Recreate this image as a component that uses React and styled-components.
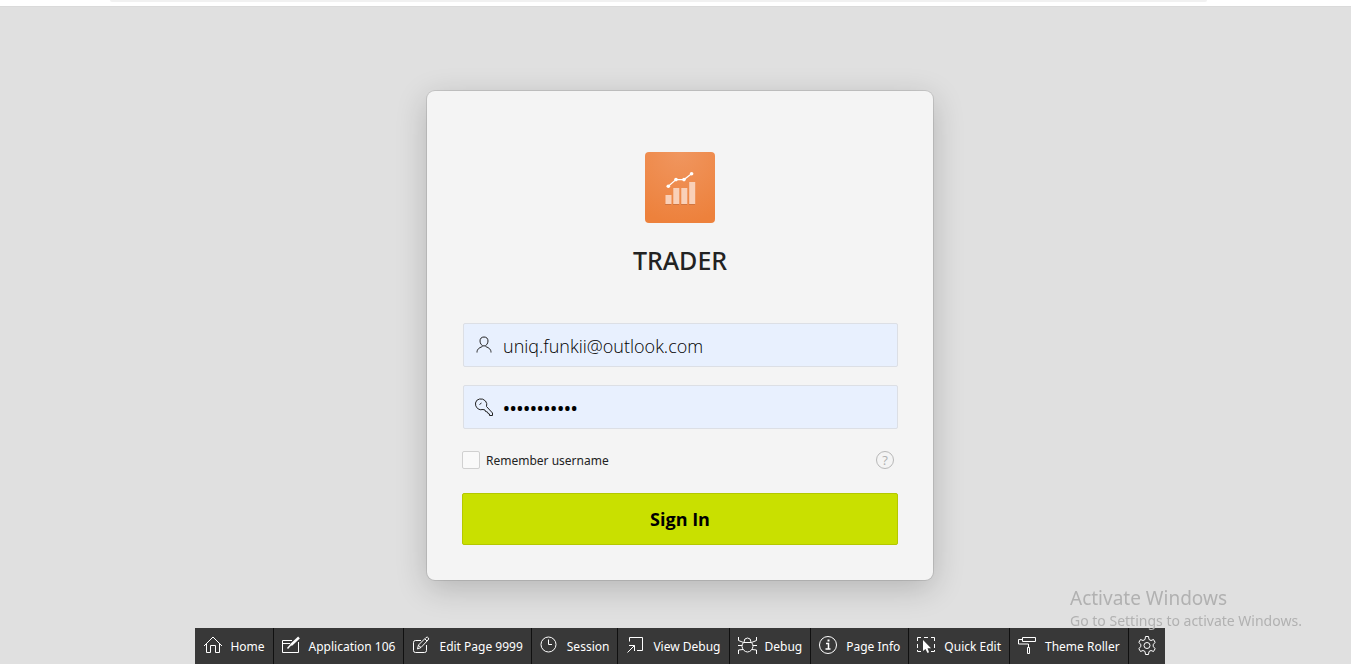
import React from "react";
import styled, { createGlobalStyle } from "styled-components";

const GlobalStyle = createGlobalStyle`
  *, *::before, *::after { box-sizing: border-box; }
  body {
    margin: 0;
    background: #e0e0e0;
    color: #222;
    font-family: "Open Sans", "Noto Sans", sans-serif;
  }
  button, input { font-family: inherit; color: inherit; }
`;

const smallTextFont = `"Noto Sans", "Open Sans", sans-serif`;

const Page = styled.div`
  min-height: 100vh;
  display: flex;
  flex-direction: column;
`;

const TopStrip = styled.div`
  height: 7px;
  flex: none;
  padding: 0 144px 0 110px;
  background: #fff;
  border-bottom: 1px solid #dadada;
`;

const TopTab = styled.div`
  height: 2px;
  background: #f1f1f1;
  border-radius: 0 0 8px 8px;
`;

const Main = styled.main`
  flex: 1;
  display: flex;
  justify-content: center;
  align-items: flex-start;
  padding: 84px 0 48px 9px;
`;

const Card = styled.form`
  width: 506px;
  max-width: 100%;
  padding: 61px 35px 35px;
  display: flex;
  flex-direction: column;
  background: #f4f4f4;
  border-radius: 8px;
  box-shadow: 0 0 0 1px rgba(0, 0, 0, 0.1), 0 8px 32px rgba(0, 0, 0, 0.2);
`;

const Logo = styled.svg`
  align-self: center;
  width: 70px;
  height: 71px;
`;

const Title = styled.h1`
  margin: 20px 0 46px;
  text-align: center;
  font-family: ${smallTextFont};
  font-size: 25px;
  line-height: 34px;
  font-weight: 500;
`;

const Field = styled.label`
  display: flex;
  align-items: center;
  height: 44px;
  margin: 0 0 18px 1px;
  padding: 0 10px;
  gap: 8px;
  background: #e8f0fe;
  border: 1px solid #dcdfe5;
  border-radius: 2px;

  svg { flex: none; }
`;

const Input = styled.input`
  flex: 1;
  min-width: 0;
  height: 42px;
  padding: 2px 0 0 1px;
  border: 0;
  outline: 0;
  background: transparent;
  color: #000;
  font-size: 18px;
  font-weight: ${(p) => (p.type === "password" ? 600 : 300)};
`;

const Options = styled.div`
  display: flex;
  align-items: center;
  justify-content: space-between;
  height: 26px;
  margin-bottom: 20px;
  padding-right: 4px;
`;

const Remember = styled.label`
  display: flex;
  align-items: center;
  gap: 6px;
  font-family: ${smallTextFont};
  font-size: 12px;
  line-height: 20px;

  span { padding-top: 2px; }
`;

const Checkbox = styled.input`
  appearance: none;
  width: 18px;
  height: 18px;
  margin: 0;
  background: #f9f9f9;
  border: 1px solid #d0d0d0;
  border-radius: 2px;
`;

const HelpButton = styled.button`
  width: 18px;
  height: 18px;
  padding: 0;
  border: 1px solid #b8b8b8;
  border-radius: 50%;
  background: transparent;
  color: #b0b0b0;
  font-size: 13px;
  line-height: 16px;
`;

const SignIn = styled.button`
  height: 52px;
  border: 1px solid #b4c800;
  border-radius: 2px;
  background: #c9e000;
  color: #000;
  font-size: 18px;
  font-weight: 700;
`;

const ToolbarDock = styled.footer`
  position: fixed;
  left: 9px;
  right: 0;
  bottom: 0;
  display: flex;
  justify-content: center;
`;

const Toolbar = styled.nav`
  display: flex;
  height: 36px;
  background: #383838;
`;

const Tool = styled.button`
  display: flex;
  align-items: center;
  gap: 7px;
  padding: 0 8px;
  border: 0;
  border-right: 1px solid #101010;
  background: transparent;
  color: #fff;
  font-family: ${smallTextFont};
  font-size: 12px;
  line-height: 20px;
  white-space: nowrap;

  svg { flex: none; }
  span { padding-top: 1px; }
  &:last-child { border-right: 0; }
`;

const Watermark = styled.aside`
  position: fixed;
  right: 45px;
  bottom: 33px;
  width: 236px;
  color: #b1b1b1;
  font-family: ${smallTextFont};
  pointer-events: none;
  white-space: nowrap;
`;

const WatermarkTitle = styled.div`
  font-size: 19px;
  line-height: 26px;
`;

const WatermarkText = styled.div`
  font-size: 14px;
  line-height: 20px;
`;

const Icon = ({ children }) => (
  <svg width="20" height="20" viewBox="0 0 20 20" fill="none" stroke="currentColor" aria-hidden="true">
    {children}
  </svg>
);

const tools = [
  ["Home", <><path d="M1 10 10 1l9 9" /><path d="M3.500 8v8.500h4v-7h5v7h4V8" /></>],
  ["Application 106", <><path d="M10 4.500H.5v12h16V6M.5 7.500H8" /><path d="m17 1.500-8 7.500" strokeWidth="2.400" /><path d="m9 8.500-3.500 4" strokeWidth="1.500" /></>],
  ["Edit Page 9999", <><path d="M9 4.500H3.500a2 2 0 0 0-2 2v8a2 2 0 0 0 2 2h9a2 2 0 0 0 2-2V9" /><path d="m5.500 13 1-4 7.500-7.500q1.500-1 2.500.5.500 1-.5 2L9 11.500l-3.500 1.500zM13 3l2 2M6.500 9.500 9 11.500" /></>],
  ["Session", <><circle cx="8.5" cy="8.5" r="7.500" /><path d="M8.500 3.500v5H12" /></>],
  ["View Debug", <><path d="M3.500 5.500v-4h13v13H11" /><path d="m1.500 16.500 7-7M3 9.500h5.500V15" /></>],
  ["Debug", <><path d="M5.500 6.500h8q1.500 1.500 1.500 4-1 5-5.500 5.500Q5 15.500 4 10.500q0-2.500 1.500-4zM6 6q0-4 3.500-4T13 6" /><path d="M.5 1v3.500l5 2M18.500 1v3.500l-5 2M0 9.500h4M15 9.500h4M5 13.500l-4.500.5v4M14 13.500l4.500.5v4" /></>],
  ["Page Info", <><circle cx="9" cy="9" r="8.500" /><path d="M7 7.500h2.500v5M6.500 13h5" strokeWidth="1.500" /><path d="M8.500 4.500h2" strokeWidth="2" /></>],
  ["Quick Edit", <><path d="M.5 5V1.500H4M7 1.500h4M14 1.500h3.500V5M17.500 8v4M17.500 14v1.500H14M.5 8v4M.5 14v1.500H4" /><path d="M6 4v11l2.500-2 2 4 1.500-.7-1.500-4H14z" fill="currentColor" stroke="none" /></>],
  ["Theme Roller", <><path d="M4.500 1.500h13v4h-13zM4.500 3.500h-4v4.500h10v3.500M9.500 11.500h2v6h-2z" /></>],
  ["", <><path d="M8.500.5h3l.5 3 2 1 2.500-1 1.700 3-2 1.800v2.400l2 1.800-1.700 3-2.500-1-2 1-.5 3h-3l-.5-3-2-1-2.500 1-1.700-3 2-1.800V8.300l-2-1.800 1.700-3 2.500 1 2-1z" /><circle cx="10" cy="9.5" r="3" /></>],
];

export default function App() {
  return (
    <Page>
      <GlobalStyle />
      <TopStrip><TopTab /></TopStrip>
      <Main>
        <Card onSubmit={(e) => e.preventDefault()}>
          <Logo viewBox="0 0 70 71" role="img" aria-label="Trader logo">
            <defs>
              <radialGradient id="glow" cx="50%" cy="0%" r="100%">
                <stop offset="0" stopColor="#f0965f" />
                <stop offset="1" stopColor="#ed813c" />
              </radialGradient>
            </defs>
            <rect width="70" height="71" rx="4" fill="url(#glow)" />
            <path d="M20 52.500h6M28 52.500h6M36 52.500h6M44 52.500h6" stroke="#d07540" />
            <path d="M20.500 43h6v9h-6zM28.300 36h6v16h-6zM36.300 36h6v16h-6zM44.200 30h6v22h-6z" fill="#f9d0b8" />
            <g fill="#fff">
              <path d="m23.300 34.300 7.700-6.700h8l7.600-5.800" fill="none" stroke="#fff" strokeWidth="1.200" />
              <circle cx="23.3" cy="34.3" r="1.800" />
              <circle cx="31" cy="27.6" r="1.800" />
              <circle cx="39" cy="27.6" r="1.800" />
              <circle cx="46.6" cy="21.8" r="1.800" />
            </g>
          </Logo>
          <Title>TRADER</Title>
          <Field>
            <Icon>
              <path d="M10 2C7.500 2 6 3.500 6 6s1.700 5 4 5 4-2.500 4-5-1.500-4-4-4zM3 17.500c0-3 1.500-4.500 5.500-6M17 17.500c0-3-1.500-4.500-5.500-6" />
            </Icon>
            <Input type="text" aria-label="Username" defaultValue="uniq.funkii@outlook.com" />
          </Field>
          <Field>
            <Icon>
              <path d="M12.500 9.500q1-3-1-5.500-2.500-2.700-6-2T1.500 6Q1 9 3.500 11.500 6 13.500 9 12.500l2 .5.500 1.500 2 .5.500 1.500 1.500.5V18.500h3V16zM5.500 7.500l2-1.500" />
            </Icon>
            <Input type="password" aria-label="Password" defaultValue="abcdefghijk" />
          </Field>
          <Options>
            <Remember><Checkbox type="checkbox" /><span>Remember username</span></Remember>
            <HelpButton type="button" aria-label="Help">?</HelpButton>
          </Options>
          <SignIn type="submit">Sign In</SignIn>
        </Card>
      </Main>
      <ToolbarDock>
        <Toolbar aria-label="Developer toolbar">
          {tools.map(([label, drawing]) => (
            <Tool key={label} type="button" aria-label={label || "Settings"}>
              <Icon>{drawing}</Icon>
              {label && <span>{label}</span>}
            </Tool>
          ))}
        </Toolbar>
      </ToolbarDock>
      <Watermark>
        <WatermarkTitle>Activate Windows</WatermarkTitle>
        <WatermarkText>Go to Settings to activate Windows.</WatermarkText>
      </Watermark>
    </Page>
  );
}
